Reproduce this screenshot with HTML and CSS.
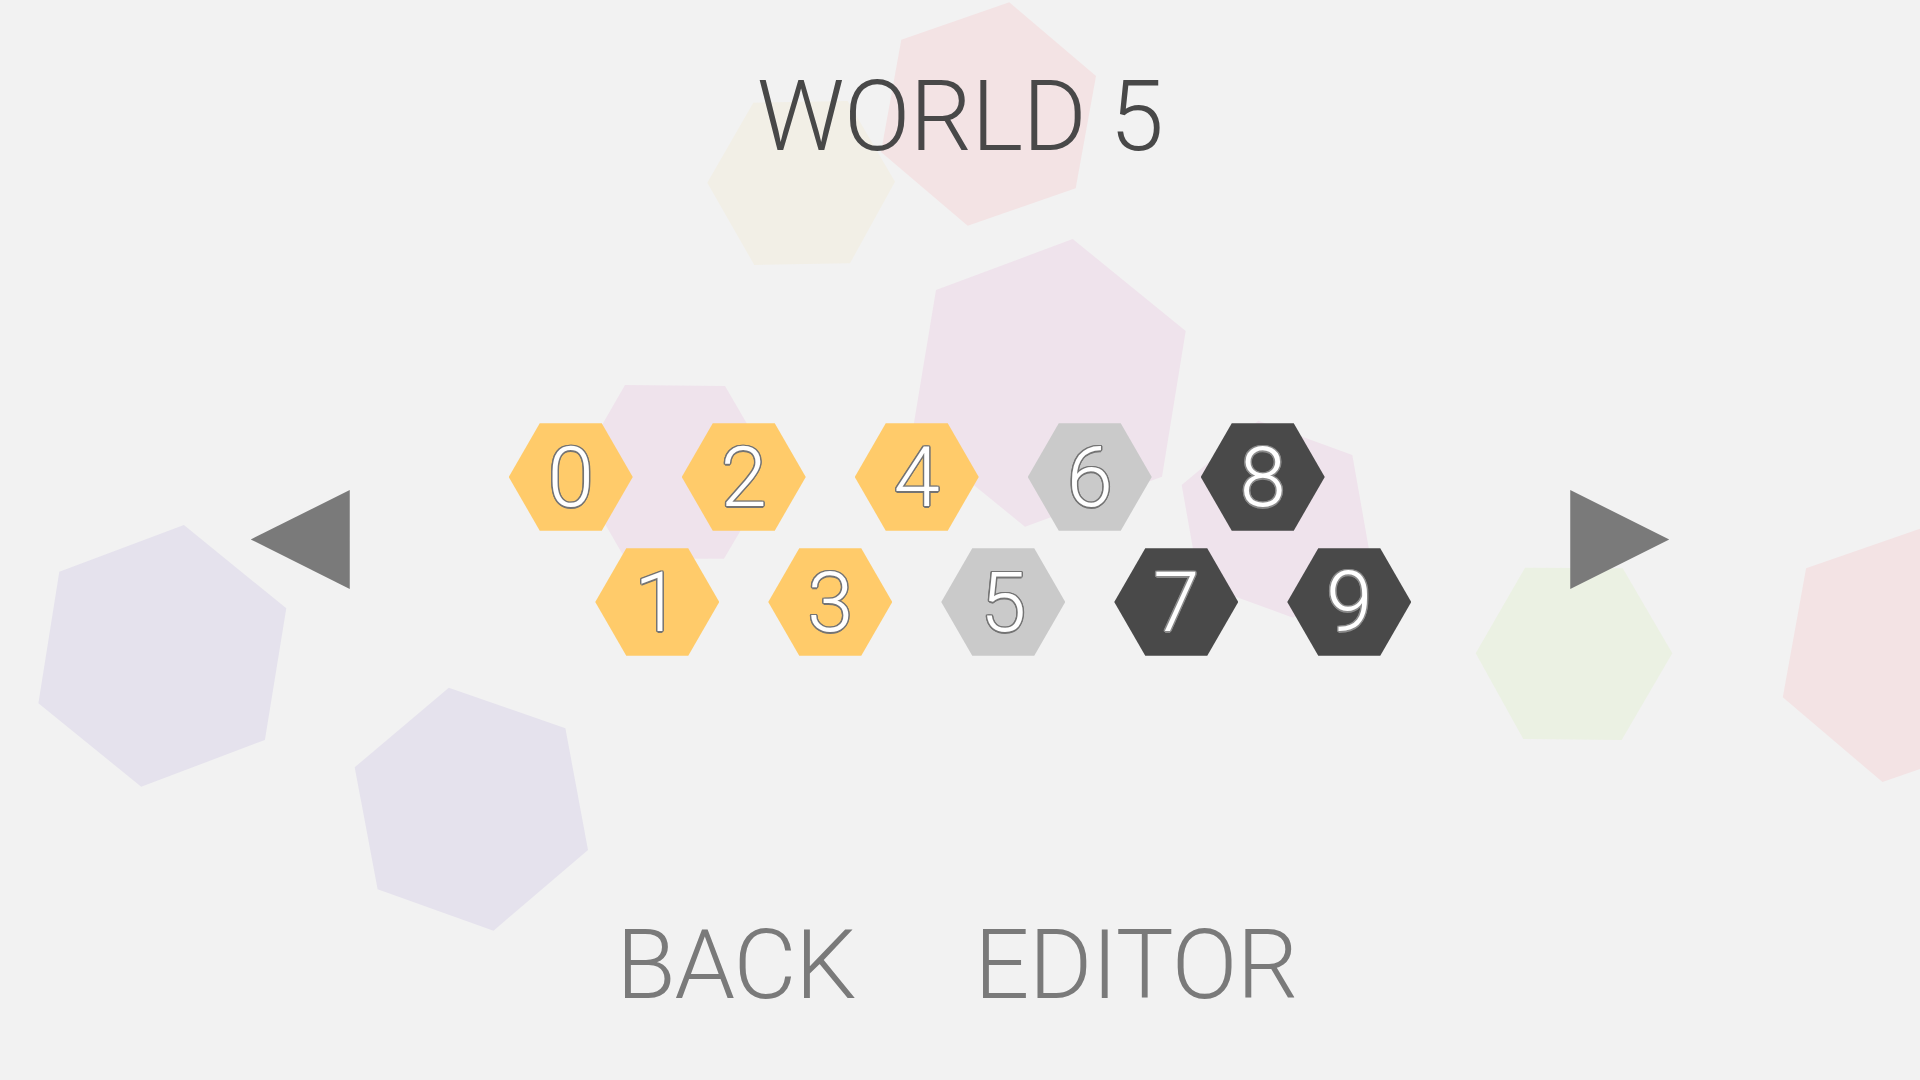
FILE: index.html
```html
<!DOCTYPE html>
<html lang="en">
<head>
<meta charset="utf-8">
<title>World 5</title>
<link rel="stylesheet" href="styles.css">
</head>
<body>
<div class="screen">
  <svg class="backdrop" width="1920" height="1080" viewBox="0 0 1920 1080" aria-hidden="true">
    <polygon class="bg-pink" points="1009.3,2.3 1096,76 1075.7,188.3 967.7,225.7 881,152 901.3,39.7"/>
    <polygon class="bg-cream" points="707.3,182.7 753.3,102.7 847.7,101 895,181.7 850,263.3 754.3,265"/>
    <polygon class="bg-mauve" points="1072.7,239 1185.7,331 1162,476.7 1025,526.7 912,434.8 936,290"/>
    <polygon class="bg-mauve" points="575,472 625,385 725,386 775,472 724,558.7 625,558.6"/>
    <polygon class="bg-mauve" points="1181.7,485 1258.3,420.7 1352.3,454.9 1369.7,553.4 1293.1,617.7 1199.1,583.5"/>
    <polygon class="bg-lilac" points="183.9,525 286.3,608.3 264.9,740 141.2,786.7 38.4,703.3 59.3,571.7"/>
    <polygon class="bg-lilac" points="448.8,687.7 565.4,728.3 588,850 493.5,930.7 377.6,889.3 354.7,767.3"/>
    <polygon class="bg-green" points="1525,567.7 1622.7,568.3 1672.3,653.3 1621.7,740 1523.3,739 1475.7,653.3"/>
    <polygon class="bg-pink" points="1930.3,525.1 2030,609.9 2006.7,739 1882.5,782.1 1782.8,697.3 1806.1,568.2"/>
  </svg>

  <h1 class="title">WORLD 5</h1>

  <div class="middle">
    <div class="arrow arrow-left"></div>
    <div class="levels">
      <div class="hex hex-done"><span>0</span></div>
      <div class="hex hex-done low"><span>1</span></div>
      <div class="hex hex-done"><span>2</span></div>
      <div class="hex hex-done low"><span>3</span></div>
      <div class="hex hex-done"><span>4</span></div>
      <div class="hex hex-open low"><span>5</span></div>
      <div class="hex hex-open"><span>6</span></div>
      <div class="hex hex-locked low"><span>7</span></div>
      <div class="hex hex-locked"><span>8</span></div>
      <div class="hex hex-locked low"><span>9</span></div>
    </div>
    <div class="arrow arrow-right"></div>
  </div>

  <div class="buttons">
    <div class="btn btn-back">BACK</div>
    <div class="btn btn-editor">EDITOR</div>
  </div>
</div>
</body>
</html>
```

FILE: styles.css
```css
html, body {
  margin: 0;
  padding: 0;
  background: #f2f2f2;
}

.screen {
  position: relative;
  width: 1920px;
  height: 1080px;
  overflow: hidden;
  display: flex;
  flex-direction: column;
  align-items: center;
  font-family: Roboto, "Liberation Sans", sans-serif;
}

.backdrop {
  position: absolute;
  left: 0;
  top: 0;
  z-index: 0;
}

.bg-pink { fill: #f3e3e4; }
.bg-cream { fill: #f2efe6; }
.bg-mauve { fill: #efe3ec; }
.bg-lilac { fill: #e5e2ed; }
.bg-green { fill: #ebf1e3; }

.title,
.middle,
.buttons {
  position: relative;
  z-index: 1;
}

.title {
  margin: 67.5px 0 0 0;
  font-size: 98px;
  line-height: 98px;
  font-weight: 300;
  color: #484848;
  letter-spacing: -0.6px;
}

.middle {
  margin-top: 257.8px;
  display: flex;
  align-items: center;
  gap: 159px;
}

.arrow {
  width: 99px;
  height: 99px;
  background: #7a7a7a;
}

.arrow-left {
  clip-path: polygon(0 50%, 100% 0, 100% 100%);
}

.arrow-right {
  clip-path: polygon(0 0, 100% 50%, 0 100%);
}

.levels {
  display: flex;
  align-items: flex-start;
  height: 232.4px;
}

.hex {
  width: 124px;
  height: 107.4px;
  flex: none;
  margin-left: -37.5px;
  clip-path: polygon(25% 0, 75% 0, 100% 50%, 75% 100%, 25% 100%, 0 50%);
  display: flex;
  align-items: center;
  justify-content: center;
  font-size: 83px;
  line-height: 1;
  font-weight: 300;
  color: #ffffff;
}

.hex:first-child {
  margin-left: 0;
}

.hex.low {
  margin-top: 125px;
}

.hex span {
  display: block;
  padding-top: 2px;
  text-shadow:
    -1.5px 0 #747474, 1.5px 0 #747474, 0 -1.5px #747474, 0 1.5px #747474,
    -1.1px -1.1px #747474, 1.1px -1.1px #747474, -1.1px 1.1px #747474, 1.1px 1.1px #747474;
}

.hex-done { background: #ffcb6a; }
.hex-open { background: #cacaca; }
.hex-locked { background: #494949; }

.hex-locked span {
  text-shadow:
    -1.5px 0 #8a8a8a, 1.5px 0 #8a8a8a, 0 -1.5px #8a8a8a, 0 1.5px #8a8a8a,
    -1.1px -1.1px #8a8a8a, 1.1px -1.1px #8a8a8a, -1.1px 1.1px #8a8a8a, 1.1px 1.1px #8a8a8a;
}

.buttons {
  margin-top: 261.6px;
  display: flex;
  gap: 119px;
  padding-right: 6px;
}

.btn {
  font-size: 97px;
  line-height: 97px;
  font-weight: 300;
  color: #7a7a7a;
}

.btn-back {
  letter-spacing: -1.2px;
}

.btn-editor {
  letter-spacing: -0.6px;
}
```
